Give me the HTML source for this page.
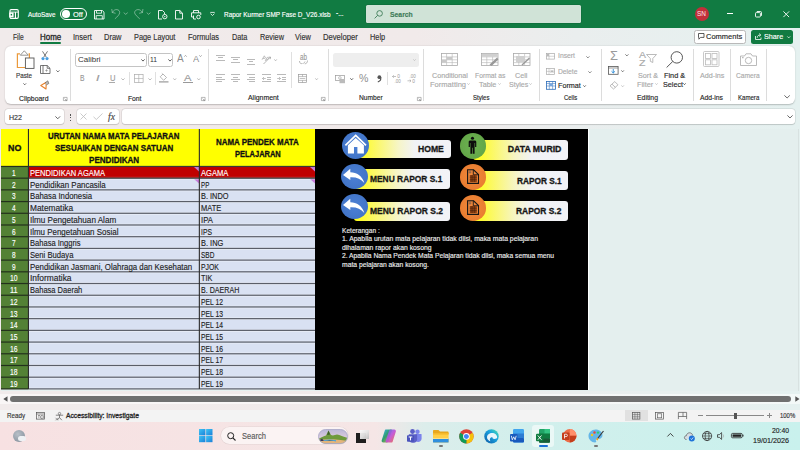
<!DOCTYPE html>
<html><head><meta charset="utf-8"><style>
*{margin:0;padding:0;box-sizing:border-box}
html,body{width:800px;height:450px;overflow:hidden;font-family:"Liberation Sans",sans-serif;}
body{position:relative;background:linear-gradient(90deg,#f1ebeb 0%,#f1eaea 52%,#eaeeee 72%,#e5f1f0 100%);}
.a{position:absolute}
.t{position:absolute;white-space:nowrap;line-height:1;-webkit-text-stroke:0.14px currentColor}
.b{-webkit-text-stroke:0.3px currentColor}
svg{position:absolute;overflow:visible}
</style></head><body>
<div class="a" style="left:0;top:0;width:800px;height:28px;background:#117b42"></div>
<svg style="left:9px;top:9px" width="10" height="10" viewBox="0 0 10 10"><rect x="0.9" y="0.6" width="8.4" height="8.8" rx="1.3" fill="none" stroke="#fff" stroke-width="1.1"/><path d="M0.9 3.1H9.3" stroke="#fff" stroke-width="0.9"/><rect x="0.2" y="3.4" width="4.4" height="4.8" rx=".5" fill="#fff"/><rect x="1.7" y="4.9" width="1.4" height="1.6" fill="#117b42"/><rect x="5.9" y="3.1" width="1.1" height="6.2" fill="#fff"/></svg>
<div class="t " style="left:28.10px;top:11.00px;font-size:7.27px;color:#ffffff;transform:scaleX(0.873);transform-origin:0 0;">AutoSave</div>
<div class="a" style="left:60px;top:7.8px;width:27px;height:12.4px;border:1px solid #fff;border-radius:7px"></div>
<div class="a" style="left:62.4px;top:10.2px;width:7.6px;height:7.6px;border-radius:50%;background:#fff"></div>
<div class="t " style="left:73.00px;top:11.00px;font-size:7.27px;color:#ffffff;transform:scaleX(1.022);transform-origin:0 0;">Off</div>
<svg style="left:94px;top:9.6px" width="10.5" height="9.5" viewBox="0 0 10.5 9.5"><path d="M0.5 0.5H8.3L10 2.2V9H0.5Z" fill="none" stroke="#fff" stroke-width="0.9"/><path d="M2.5 0.5V3.2H7.5V0.5M2.2 9V5.6H8.3V9" fill="none" stroke="#fff" stroke-width="0.8"/></svg>
<svg style="left:0;top:0" width="160" height="28" viewBox="0 0 160 28"><g fill="none" stroke="rgba(255,255,255,.42)" stroke-width="0.95" stroke-linecap="round"><path d="M112.4 12.3C113.6 10.3 115 9.5 116.9 9.6C118.7 9.8 119.8 11 119.7 12.75C119.6 14.5 117.2 16.8 115.2 18.6"/><path d="M111.8 9.4L112.3 12.5L115.2 13.2"/><path d="M142.3 12.3C141.1 10.3 139.7 9.5 137.8 9.6C136 9.8 134.6 11 134.6 12.75C134.7 14.5 137.5 16.8 139.5 18.6"/><path d="M142.9 9.4L142.4 12.5L139.5 13.2"/><path d="M124 12.9L125.7 14.3L127.4 12.9"/><path d="M147 12.9L148.6 14.3L150.2 12.9"/></g></svg>
<svg style="left:157.5px;top:9.6px" width="10" height="9.5" viewBox="0 0 10 9.5"><path d="M0.5 0.5H4.5L6.5 2.5V4M0.5 0.5V9H4" fill="none" stroke="#fff" stroke-width=".9"/><circle cx="6.8" cy="6.6" r="2.2" fill="none" stroke="#fff" stroke-width=".9"/><circle cx="6.8" cy="6.6" r=".7" fill="#fff"/></svg>
<svg style="left:175px;top:9.6px" width="8" height="9.5" viewBox="0 0 8 9.5"><path d="M0.5 0.5H4.8L7.5 3.2V9H0.5Z M4.8 0.5V3.2H7.5" fill="none" stroke="#fff" stroke-width=".9"/></svg>
<svg style="left:190.7px;top:9.6px" width="10.5" height="9.5" viewBox="0 0 10.5 9.5"><path d="M2.5 2.8V0.5H7.5V2.8M2.5 7H0.5V2.8H9.8V5M2.5 5.5V9H5" fill="none" stroke="#fff" stroke-width=".9"/><circle cx="7.5" cy="7" r="1.8" fill="none" stroke="#fff" stroke-width=".9"/></svg>
<svg style="left:210px;top:12.3px" width="5" height="4" viewBox="0 0 5 4"><path d="M0.3 0.4H4.7M0.6 1.7L2.5 3.5L4.4 1.7" fill="none" stroke="#fff" stroke-width=".8"/></svg>
<div class="t " style="left:224.40px;top:11.00px;font-size:7.27px;color:#ffffff;transform:scaleX(0.884);transform-origin:0 0;">Rapor Kurmer SMP Fase D_V26.xlsb</div>
<div class="t " style="left:336.00px;top:9.10px;font-size:9.33px;color:#ffffff;transform:scaleX(0.699);transform-origin:0 0;">-...</div>
<div class="a" style="left:365.5px;top:5px;width:215.3px;height:18px;background:#d0e3d7;border-radius:1.5px;box-shadow:0 0 0 0.5px rgba(0,0,0,.15)"></div>
<svg style="left:373.5px;top:9.5px" width="9" height="9" viewBox="0 0 9 9"><circle cx="5.6" cy="3.4" r="2.8" fill="none" stroke="#3f7d59" stroke-width=".9"/><path d="M3.6 5.4L0.6 8.4" stroke="#3f7d59" stroke-width=".9"/></svg>
<div class="t " style="left:390.00px;top:11.00px;font-size:7.99px;font-weight:bold;color:#3d7b57;transform:scaleX(0.855);transform-origin:0 0;">Search</div>
<div class="a" style="left:694.6px;top:6.8px;width:14.2px;height:14.2px;border-radius:50%;background:#c0303a"></div>
<div class="t " style="left:697.20px;top:11.00px;font-size:6.40px;color:#ffe5e5;transform:scaleX(1.012);transform-origin:0 0;-webkit-text-stroke:0;">SN</div>
<div class="a" style="left:726.5px;top:13.4px;width:6.3px;height:0.9px;background:#fff"></div>
<svg style="left:754.5px;top:11px" width="7" height="6.5" viewBox="0 0 7 6.5"><rect x="0.5" y="1.6" width="4.9" height="4.4" rx=".8" fill="none" stroke="#fff" stroke-width=".9"/><path d="M1.8 0.5H5.6A1 1 0 0 1 6.5 1.4V4.8" fill="none" stroke="#fff" stroke-width=".9"/></svg>
<svg style="left:783px;top:11px" width="6.5" height="6.5" viewBox="0 0 6.5 6.5"><path d="M0.4 0.4L6.1 6.1M6.1 0.4L0.4 6.1" stroke="#fff" stroke-width=".9"/></svg>
<div class="t " style="left:13.00px;top:33.00px;font-size:8.36px;color:#303030;transform:scaleX(0.799);transform-origin:0 0;">File</div>
<div class="t " style="left:72.50px;top:33.00px;font-size:8.36px;color:#303030;transform:scaleX(0.897);transform-origin:0 0;">Insert</div>
<div class="t " style="left:103.75px;top:33.00px;font-size:8.36px;color:#303030;transform:scaleX(0.897);transform-origin:0 0;">Draw</div>
<div class="t " style="left:134.25px;top:33.00px;font-size:8.36px;color:#303030;transform:scaleX(0.884);transform-origin:0 0;">Page Layout</div>
<div class="t " style="left:188.25px;top:33.00px;font-size:8.36px;color:#303030;transform:scaleX(0.891);transform-origin:0 0;">Formulas</div>
<div class="t " style="left:232.25px;top:33.00px;font-size:8.36px;color:#303030;transform:scaleX(0.874);transform-origin:0 0;">Data</div>
<div class="t " style="left:259.75px;top:33.00px;font-size:8.36px;color:#303030;transform:scaleX(0.874);transform-origin:0 0;">Review</div>
<div class="t " style="left:295.00px;top:33.00px;font-size:8.36px;color:#303030;transform:scaleX(0.885);transform-origin:0 0;">View</div>
<div class="t " style="left:322.50px;top:33.00px;font-size:8.36px;color:#303030;transform:scaleX(0.916);transform-origin:0 0;">Developer</div>
<div class="t " style="left:369.80px;top:33.00px;font-size:8.36px;color:#303030;transform:scaleX(0.879);transform-origin:0 0;">Help</div>
<div class="t b" style="left:39.50px;top:33.00px;font-size:8.36px;color:#262626;transform:scaleX(0.952);transform-origin:0 0;">Home</div>
<div class="a" style="left:39.5px;top:42.4px;width:21.3px;height:1.5px;border-radius:1px;background:#117b42"></div>
<div class="a" style="left:694.2px;top:30px;width:52px;height:13.8px;background:#fff;border:1px solid #b9b9b9;border-radius:2.5px"></div>
<svg style="left:697.5px;top:33.2px" width="6.5" height="7" viewBox="0 0 6.5 7"><path d="M0.5 0.5H6V4.4H2.6L0.9 6.2V4.4H0.5Z" fill="none" stroke="#333" stroke-width=".8"/></svg>
<div class="t " style="left:706.20px;top:33.00px;font-size:7.56px;color:#262626;transform:scaleX(0.993);transform-origin:0 0;">Comments</div>
<div class="a" style="left:751.2px;top:30px;width:41.8px;height:13.8px;background:#117b42;border-radius:2.5px"></div>
<svg style="left:754.5px;top:33px" width="7" height="7" viewBox="0 0 7 7"><path d="M0.5 3V6.5H6V4.5M2.2 4.8C2.2 3 3.5 2 5 2M4.2 0.6L5.9 2L4.2 3.4" fill="none" stroke="#fff" stroke-width=".8"/></svg>
<div class="t " style="left:763.80px;top:33.00px;font-size:7.56px;color:#fff;transform:scaleX(0.951);transform-origin:0 0;">Share</div>
<svg style="left:787.3px;top:35.6px" width="3.5" height="2.5" viewBox="0 0 3.5 2.5"><path d="M0.3 0.4L1.75 1.9L3.2 0.4" fill="none" stroke="#fff" stroke-width=".7"/></svg>
<div class="a" style="left:5px;top:46px;width:790px;height:58px;background:#fff;border-radius:6px;box-shadow:0 0.6px 1.5px rgba(0,0,0,.22)"></div>
<svg style="left:16px;top:50px" width="19" height="19" viewBox="0 0 19 19"><path d="M9 17.5H1.4V3.9H4M12.6 3.9H13.4V8" fill="none" stroke="#eb9a3b" stroke-width="1.2"/><path d="M4.3 5.2L8.3 0.8L12.3 5.2Z" fill="#fff" stroke="#7a7a7a" stroke-width=".8" stroke-linejoin="round"/><rect x="9.4" y="8" width="8.6" height="10.4" fill="#fff" stroke="#555" stroke-width=".9"/></svg>
<div class="t " style="left:15.90px;top:72.00px;font-size:7.85px;color:#333;transform:scaleX(0.803);transform-origin:0 0;">Paste</div>
<svg style="left:22.5px;top:83.2px" width="3.5" height="2.2" viewBox="0 0 3.5 2.2"><path d="M0.4 0.4L1.75 1.8000000000000003L3.1 0.4" fill="none" stroke="#444" stroke-width="0.8"/></svg>
<svg style="left:40.5px;top:51px" width="8" height="9.5" viewBox="0 0 8 9.5"><path d="M1.5 0.3L5.2 6M6.5 0.3L2.8 6" stroke="#555" stroke-width=".8"/><circle cx="2" cy="7.6" r="1.6" fill="#4a9ee0"/><circle cx="6" cy="7.6" r="1.6" fill="#4a9ee0"/></svg>
<svg style="left:39.5px;top:65.3px" width="10.5" height="9" viewBox="0 0 10.5 9"><path d="M3 8.5H0.5V0.5H3.5" fill="none" stroke="#555" stroke-width=".8"/><path d="M3 0.5H7.2L10 3.3V8.5H3Z M7.2 0.5V3.3H10" fill="none" stroke="#555" stroke-width=".8"/><path d="M5.2 5.5H7.8M6.5 4.2V6.8" stroke="#777" stroke-width=".5"/></svg>
<svg style="left:56.2px;top:69.5px" width="3.8" height="2.3" viewBox="0 0 3.8 2.3"><path d="M0.4 0.4L1.9 1.9L3.4 0.4" fill="none" stroke="#444" stroke-width="0.8"/></svg>
<svg style="left:40px;top:80.3px" width="10" height="9.5" viewBox="0 0 10 9.5"><path d="M0.8 5.5L6.2 2.3L6 9Z" fill="#fff" stroke="#e8812a" stroke-width="1.1" stroke-linejoin="round"/><path d="M5 3L7.8 0.8L8.8 3.5L6.3 5" fill="#bbb" stroke="#555" stroke-width=".6"/></svg>
<div class="t " style="left:18.75px;top:95.00px;font-size:6.98px;color:#262626;transform:scaleX(0.988);transform-origin:0 0;">Clipboard</div>
<svg style="left:63.2px;top:96.6px" width="4.5" height="4" viewBox="0 0 4.5 4"><path d="M0.4 3.6V0.4H4.1V3.6Z" fill="none" stroke="#8a8a8a" stroke-width=".6"/><path d="M1.6 1.6L3.6 3.6M3.6 2.4V3.6H2.4" fill="none" stroke="#8a8a8a" stroke-width=".6"/></svg>
<div class="a" style="left:69.5px;top:48.8px;width:1px;height:52.2px;background:#dcdcdc"></div>
<div class="a" style="left:75px;top:52.8px;width:71.8px;height:14px;border:1px solid #c4c4c4;border-radius:2.5px;background:#fff"></div>
<div class="t " style="left:77.80px;top:56.00px;font-size:6.98px;color:#333;transform:scaleX(1.143);transform-origin:0 0;-webkit-text-stroke:0;">Calibri</div>
<svg style="left:141.2px;top:59.2px" width="4" height="2.5" viewBox="0 0 4 2.5"><path d="M0.4 0.4L2.0 2.1L3.6 0.4" fill="none" stroke="#333" stroke-width="0.8"/></svg>
<div class="a" style="left:148.3px;top:52.8px;width:24.7px;height:14px;border:1px solid #c4c4c4;border-radius:2.5px;background:#fff"></div>
<div class="t " style="left:150.20px;top:56.00px;font-size:6.98px;color:#333;transform:scaleX(0.965);transform-origin:0 0;-webkit-text-stroke:0;">11</div>
<svg style="left:167.6px;top:59.2px" width="4" height="2.5" viewBox="0 0 4 2.5"><path d="M0.4 0.4L2.0 2.1L3.6 0.4" fill="none" stroke="#333" stroke-width="0.8"/></svg>
<div class="t " style="left:177.30px;top:54.00px;font-size:10.47px;color:#8c8c8c;transform:scaleX(0.956);transform-origin:0 0;-webkit-text-stroke:0;">A</div>
<svg style="left:183.8px;top:55px" width="3" height="2" viewBox="0 0 3 2"><path d="M0.3 1.7L1.5 0.4L2.7 1.7" fill="none" stroke="#777" stroke-width=".6"/></svg>
<div class="t " style="left:193.30px;top:56.00px;font-size:8.28px;color:#8c8c8c;transform:scaleX(1.117);transform-origin:0 0;-webkit-text-stroke:0;">A</div>
<svg style="left:199.2px;top:55px" width="3" height="2" viewBox="0 0 3 2"><path d="M0.3 0.3L1.5 1.6L2.7 0.3" fill="none" stroke="#777" stroke-width=".6"/></svg>
<div class="t " style="left:80.00px;top:74.00px;font-size:8.43px;color:#9a9a9a;transform:scaleX(0.803);transform-origin:0 0;">B</div>
<div class="t " style="left:95.50px;top:73.86px;font-size:8.43px;font-style:italic;color:#9a9a9a;transform:scaleX(1.483);transform-origin:0 0;">I</div>
<div class="t " style="left:109.50px;top:74.00px;font-size:8.43px;color:#9a9a9a;transform:scaleX(0.906);transform-origin:0 0;">U</div>
<div class="a" style="left:109px;top:82px;width:6px;height:.7px;background:#aaa"></div>
<svg style="left:121px;top:77.9px" width="4" height="2.4" viewBox="0 0 4 2.4"><path d="M0.4 0.4L2.0 2.0L3.6 0.4" fill="none" stroke="#aaa" stroke-width="0.8"/></svg>
<div class="a" style="left:129.0px;top:72px;width:1px;height:13.299999999999997px;background:#e0e0e0"></div>
<svg style="left:133.8px;top:74px" width="9.5" height="9" viewBox="0 0 9.5 9"><rect x="0.4" y="0.4" width="8.7" height="8.2" fill="none" stroke="#aaa" stroke-width=".7"/><path d="M4.75 0.4V8.6M0.4 4.5H9.1" stroke="#aaa" stroke-width=".6"/></svg>
<svg style="left:147.5px;top:77.9px" width="4" height="2.4" viewBox="0 0 4 2.4"><path d="M0.4 0.4L2.0 2.0L3.6 0.4" fill="none" stroke="#aaa" stroke-width="0.8"/></svg>
<div class="a" style="left:154.8px;top:72px;width:1px;height:13.299999999999997px;background:#e0e0e0"></div>
<svg style="left:159.3px;top:73.3px" width="9.5" height="9.5" viewBox="0 0 9.5 9.5"><path d="M4 1L7.5 4.5L4.6 7.3L1.2 3.8Z" fill="none" stroke="#999" stroke-width=".7"/><path d="M2.8 0.3L4 1.4" stroke="#999" stroke-width=".6"/><rect x="0" y="8.3" width="9.5" height="1.2" fill="#999"/></svg>
<svg style="left:173.3px;top:77.9px" width="3.5" height="2.4" viewBox="0 0 3.5 2.4"><path d="M0.4 0.4L1.75 2.0L3.1 0.4" fill="none" stroke="#aaa" stroke-width="0.8"/></svg>
<div class="t " style="left:184.30px;top:73.00px;font-size:9.88px;color:#999;transform:scaleX(1.133);transform-origin:0 0;">A</div>
<div class="a" style="left:183.3px;top:81.8px;width:9.5px;height:1.2px;background:#999"></div>
<svg style="left:197.2px;top:77.9px" width="3.5" height="2.4" viewBox="0 0 3.5 2.4"><path d="M0.4 0.4L1.75 2.0L3.1 0.4" fill="none" stroke="#aaa" stroke-width="0.8"/></svg>
<div class="t " style="left:128.30px;top:95.00px;font-size:6.98px;color:#262626;transform:scaleX(0.968);transform-origin:0 0;">Font</div>
<svg style="left:201.3px;top:96.6px" width="4.5" height="4" viewBox="0 0 4.5 4"><path d="M0.4 3.6V0.4H4.1V3.6Z" fill="none" stroke="#8a8a8a" stroke-width=".6"/><path d="M1.6 1.6L3.6 3.6M3.6 2.4V3.6H2.4" fill="none" stroke="#8a8a8a" stroke-width=".6"/></svg>
<div class="a" style="left:207.8px;top:48.7px;width:1px;height:52.0px;background:#dcdcdc"></div>
<div class="a" style="left:216.0px;top:54.9px;width:8.5px;height:.8px;background:#bababa"></div>
<div class="a" style="left:218.0px;top:57.2px;width:4.5px;height:.8px;background:#bababa"></div>
<div class="a" style="left:216.0px;top:59.8px;width:8.5px;height:.8px;background:#bababa"></div>
<div class="a" style="left:231.0px;top:56.8px;width:8.5px;height:.8px;background:#bababa"></div>
<div class="a" style="left:233.0px;top:59.1px;width:4.5px;height:.8px;background:#bababa"></div>
<div class="a" style="left:231.0px;top:61.7px;width:8.5px;height:.8px;background:#bababa"></div>
<div class="a" style="left:246.5px;top:58.9px;width:8.5px;height:.8px;background:#bababa"></div>
<div class="a" style="left:248.5px;top:61.2px;width:4.5px;height:.8px;background:#bababa"></div>
<div class="a" style="left:246.5px;top:63.8px;width:8.5px;height:.8px;background:#bababa"></div>
<svg style="left:261px;top:54.5px" width="10" height="10" viewBox="0 0 10 10"><path d="M2.5 9L9.5 2M9.5 2L7.3 2.3M9.5 2L9.2 4.2" fill="none" stroke="#999" stroke-width=".7"/><path d="M1 4.8L3.3 0.8L4.8 3.3M1.8 3.4H4M4.3 5.5L6 2.5A1 1 0 0 1 7.2 4Z" fill="none" stroke="#999" stroke-width=".6"/></svg>
<svg style="left:274.2px;top:59px" width="3.2" height="2.2" viewBox="0 0 3.2 2.2"><path d="M0.4 0.4L1.6 1.8000000000000003L2.8000000000000003 0.4" fill="none" stroke="#aaa" stroke-width="0.8"/></svg>
<div class="a" style="left:216.0px;top:74.1px;width:8.5px;height:.8px;background:#bababa"></div>
<div class="a" style="left:216.0px;top:76.8px;width:5.8px;height:.8px;background:#bababa"></div>
<div class="a" style="left:216.0px;top:79.1px;width:8.5px;height:.8px;background:#bababa"></div>
<div class="a" style="left:216.0px;top:81.4px;width:5.8px;height:.8px;background:#bababa"></div>
<div class="a" style="left:231.0px;top:74.1px;width:8.5px;height:.8px;background:#bababa"></div>
<div class="a" style="left:232.6px;top:76.8px;width:5.3px;height:.8px;background:#bababa"></div>
<div class="a" style="left:231.0px;top:79.1px;width:8.5px;height:.8px;background:#bababa"></div>
<div class="a" style="left:232.6px;top:81.4px;width:5.3px;height:.8px;background:#bababa"></div>
<div class="a" style="left:246.5px;top:74.1px;width:8.5px;height:.8px;background:#bababa"></div>
<div class="a" style="left:249.2px;top:76.8px;width:5.8px;height:.8px;background:#bababa"></div>
<div class="a" style="left:246.5px;top:79.1px;width:8.5px;height:.8px;background:#bababa"></div>
<div class="a" style="left:249.2px;top:81.4px;width:5.8px;height:.8px;background:#bababa"></div>
<div class="a" style="left:262.0px;top:74.1px;width:8.5px;height:.8px;background:#bababa"></div>
<div class="a" style="left:266.5px;top:76.8px;width:4.0px;height:.8px;background:#bababa"></div>
<div class="a" style="left:266.5px;top:79.1px;width:4.0px;height:.8px;background:#bababa"></div>
<div class="a" style="left:262.0px;top:81.4px;width:8.5px;height:.8px;background:#bababa"></div>
<svg style="left:262px;top:76px" width="4" height="5" viewBox="0 0 4 5"><path d="M3.8 2.5H0.5M2 1L0.5 2.5L2 4" fill="none" stroke="#999" stroke-width=".6"/></svg>
<div class="a" style="left:277.0px;top:74.1px;width:8.5px;height:.8px;background:#bababa"></div>
<div class="a" style="left:281.5px;top:76.8px;width:4.0px;height:.8px;background:#bababa"></div>
<div class="a" style="left:281.5px;top:79.1px;width:4.0px;height:.8px;background:#bababa"></div>
<div class="a" style="left:277.0px;top:81.4px;width:8.5px;height:.8px;background:#bababa"></div>
<svg style="left:277px;top:76px" width="4" height="5" viewBox="0 0 4 5"><path d="M0.2 2.5H3.5M2 1L3.5 2.5L2 4" fill="none" stroke="#999" stroke-width=".6"/></svg>
<div class="a" style="left:291.2px;top:52px;width:1px;height:36px;background:#e0e0e0"></div>
<div class="t " style="left:299.50px;top:52.67px;font-size:8.65px;color:#999;transform:scaleX(0.729);transform-origin:0 0;">ab</div>
<svg style="left:298.8px;top:60.3px" width="9.5" height="4.5" viewBox="0 0 9.5 4.5"><path d="M0.5 1C0.5 3 1.5 4 3.5 3.5M6 1.5L4.5 3.7M8.5 0.5C8.5 2.5 7.5 3.8 5.8 3.8" fill="none" stroke="#999" stroke-width=".7"/></svg>
<svg style="left:297.7px;top:73.7px" width="9" height="9" viewBox="0 0 9 9"><rect x="0.4" y="0.4" width="8.2" height="8.2" fill="none" stroke="#999" stroke-width=".7"/><path d="M0.4 2.6H8.6M0.4 6.4H8.6M4.5 6.4V8.6M4.5 0.4V2.6M1.7 4.5H7.3" stroke="#999" stroke-width=".6"/></svg>
<svg style="left:315px;top:77.7px" width="3.2" height="2.2" viewBox="0 0 3.2 2.2"><path d="M0.4 0.4L1.6 1.8000000000000003L2.8000000000000003 0.4" fill="none" stroke="#aaa" stroke-width="0.8"/></svg>
<div class="t " style="left:248.20px;top:94.00px;font-size:6.98px;color:#262626;transform:scaleX(0.993);transform-origin:0 0;">Alignment</div>
<svg style="left:321.4px;top:96.6px" width="4.5" height="4" viewBox="0 0 4.5 4"><path d="M0.4 3.6V0.4H4.1V3.6Z" fill="none" stroke="#8a8a8a" stroke-width=".6"/><path d="M1.6 1.6L3.6 3.6M3.6 2.4V3.6H2.4" fill="none" stroke="#8a8a8a" stroke-width=".6"/></svg>
<div class="a" style="left:327.8px;top:48.7px;width:1px;height:52.0px;background:#dcdcdc"></div>
<div class="a" style="left:333.2px;top:52.7px;width:85.8px;height:14px;border-radius:2.5px;background:#eeeeee"></div>
<svg style="left:413.3px;top:59.3px" width="3" height="2" viewBox="0 0 3 2"><path d="M0.4 0.4L1.5 1.6L2.6 0.4" fill="none" stroke="#bbb" stroke-width="0.8"/></svg>
<svg style="left:335px;top:75px" width="10.5" height="8.5" viewBox="0 0 10.5 8.5"><rect x="0.4" y="0.4" width="9" height="5" fill="none" stroke="#999" stroke-width=".7"/><circle cx="4.9" cy="2.9" r="1.3" fill="none" stroke="#999" stroke-width=".6"/><rect x="4.5" y="4" width="5.5" height="4.2" fill="#bbb"/></svg>
<svg style="left:349.7px;top:78.1px" width="3.4" height="2.2" viewBox="0 0 3.4 2.2"><path d="M0.4 0.4L1.7 1.8000000000000003L3.0 0.4" fill="none" stroke="#555" stroke-width="1"/></svg>
<div class="t " style="left:359.30px;top:72.98px;font-size:11.25px;color:#8f8f8f;transform:scaleX(0.939);transform-origin:0 0;-webkit-text-stroke:0;">%</div>
<svg style="left:377.3px;top:75px" width="4.6" height="7.2" viewBox="0 0 4.6 7.2"><circle cx="2.4" cy="2.2" r="1.9" fill="#555"/><path d="M3.6 2.5C4.2 4.5 3 6.2 0.8 7" fill="none" stroke="#555" stroke-width="1.2"/></svg>
<div class="a" style="left:387.3px;top:72.2px;width:1px;height:13.099999999999994px;background:#e0e0e0"></div>
<svg style="left:391.7px;top:73.7px" width="10" height="9" viewBox="0 0 10 9"><path d="M0.5 2.5H4M0.5 2.5L1.8 1.2M0.5 2.5L1.8 3.8" fill="none" stroke="#999" stroke-width=".6"/><text x="5.2" y="4.3" font-size="4.8" fill="#999" font-family="Liberation Sans">0</text><text x="2.5" y="8.8" font-size="4.5" fill="#999" font-family="Liberation Sans">.00</text></svg>
<svg style="left:407px;top:73.7px" width="10" height="9" viewBox="0 0 10 9"><text x="2.5" y="4.3" font-size="4.5" fill="#999" font-family="Liberation Sans">.00</text><path d="M0.5 6.8H4M4 6.8L2.7 5.5M4 6.8L2.7 8.1" fill="none" stroke="#999" stroke-width=".6"/><text x="5.2" y="8.8" font-size="4.8" fill="#999" font-family="Liberation Sans">0</text></svg>
<div class="t " style="left:359.30px;top:94.00px;font-size:6.98px;color:#262626;transform:scaleX(0.956);transform-origin:0 0;">Number</div>
<svg style="left:416.7px;top:96.6px" width="4.5" height="4" viewBox="0 0 4.5 4"><path d="M0.4 3.6V0.4H4.1V3.6Z" fill="none" stroke="#8a8a8a" stroke-width=".6"/><path d="M1.6 1.6L3.6 3.6M3.6 2.4V3.6H2.4" fill="none" stroke="#8a8a8a" stroke-width=".6"/></svg>
<div class="a" style="left:422.9px;top:48.7px;width:1px;height:52.0px;background:#dcdcdc"></div>
<svg style="left:441.3px;top:52.5px" width="17" height="13" viewBox="0 0 17 13"><rect x="0.5" y="0.5" width="16" height="12" fill="none" stroke="#aaa" stroke-width=".8"/><path d="M0.5 3.9H16.5 M0.5 6.8H16.5 M0.5 9.6H16.5 M5.6 0.5V12.5 M11.2 0.5V12.5" stroke="#b5b5b5" stroke-width=".6"/><rect x="5.6" y="4" width="5.6" height="2.8" fill="#c8c8c8"/><rect x="0.8" y="6.8" width="4.8" height="2.8" fill="#c8c8c8"/></svg>
<svg style="left:481.3px;top:52.5px" width="17.5" height="13" viewBox="0 0 17.5 13"><rect x="0.5" y="0.5" width="16.5" height="12" fill="none" stroke="#aaa" stroke-width=".8"/><path d="M0.5 3.9H17.0 M0.5 6.8H17.0 M0.5 9.6H17.0 M5.8 0.5V12.5 M11.6 0.5V12.5" stroke="#b5b5b5" stroke-width=".6"/><rect x="0.8" y="0.8" width="16" height="3" fill="#d0d0d0"/><path d="M9 12L16.5 5M10 12.5L17 6" stroke="#999" stroke-width="1.3"/></svg>
<svg style="left:513px;top:52.5px" width="17.5" height="13" viewBox="0 0 17.5 13"><rect x="0.5" y="0.5" width="16.5" height="12" fill="none" stroke="#aaa" stroke-width=".8"/><path d="M0.5 3.9H17.0 M0.5 6.8H17.0 M0.5 9.6H17.0 M5.8 0.5V12.5 M11.6 0.5V12.5" stroke="#b5b5b5" stroke-width=".6"/><rect x="3" y="3" width="9" height="6" fill="#d0d0d0"/><path d="M9 12L16.5 5" stroke="#999" stroke-width="1.4"/></svg>
<div class="t " style="left:432.00px;top:72.00px;font-size:7.99px;color:#a9a9a9;transform:scaleX(0.900);transform-origin:0 0;">Conditional</div>
<div class="t " style="left:429.50px;top:81.00px;font-size:7.99px;color:#a9a9a9;transform:scaleX(0.945);transform-origin:0 0;">Formatting</div>
<svg style="left:467px;top:83.3px" width="3" height="2" viewBox="0 0 3 2"><path d="M0.4 0.4L1.5 1.6L2.6 0.4" fill="none" stroke="#bbb" stroke-width="0.8"/></svg>
<div class="t " style="left:474.50px;top:72.00px;font-size:7.99px;color:#a9a9a9;transform:scaleX(0.848);transform-origin:0 0;">Format as</div>
<div class="t " style="left:478.80px;top:81.00px;font-size:7.99px;color:#a9a9a9;transform:scaleX(0.911);transform-origin:0 0;">Table</div>
<svg style="left:497.5px;top:83.3px" width="3" height="2" viewBox="0 0 3 2"><path d="M0.4 0.4L1.5 1.6L2.6 0.4" fill="none" stroke="#bbb" stroke-width="0.8"/></svg>
<div class="t " style="left:515.00px;top:72.00px;font-size:7.99px;color:#a9a9a9;transform:scaleX(0.906);transform-origin:0 0;">Cell</div>
<div class="t " style="left:508.80px;top:81.00px;font-size:7.99px;color:#a9a9a9;transform:scaleX(0.891);transform-origin:0 0;">Styles</div>
<svg style="left:529px;top:83.3px" width="3" height="2" viewBox="0 0 3 2"><path d="M0.4 0.4L1.5 1.6L2.6 0.4" fill="none" stroke="#bbb" stroke-width="0.8"/></svg>
<div class="t " style="left:473.00px;top:94.00px;font-size:6.98px;color:#262626;transform:scaleX(0.868);transform-origin:0 0;">Styles</div>
<div class="a" style="left:539.0px;top:48.7px;width:1px;height:52.0px;background:#dcdcdc"></div>
<svg style="left:546.3px;top:52.5px" width="9" height="6.5" viewBox="0 0 9 6.5"><rect x="0.4" y="0.4" width="8.2" height="5.7" fill="none" stroke="#aaa" stroke-width=".7"/><path d="M0.4 3.25H8.6M3 0.4V6.1" stroke="#aaa" stroke-width=".5"/><rect x="1" y="1" width="2" height="2" fill="#bbb"/></svg>
<div class="t " style="left:558.00px;top:52.00px;font-size:7.56px;color:#a9a9a9;transform:scaleX(0.900);transform-origin:0 0;">Insert</div>
<svg style="left:585.5px;top:55.5px" width="3.8" height="2.3" viewBox="0 0 3.8 2.3"><path d="M0.4 0.4L1.9 1.9L3.4 0.4" fill="none" stroke="#666" stroke-width="0.8"/></svg>
<svg style="left:546.3px;top:67.5px" width="9" height="6.8" viewBox="0 0 9 6.8"><rect x="0.4" y="0.4" width="8.2" height="6" fill="none" stroke="#aaa" stroke-width=".7"/><path d="M0.4 3.4H8.6M3 0.4V6.4" stroke="#aaa" stroke-width=".5"/><path d="M4.5 1.8L7.5 5M7.5 1.8L4.5 5" stroke="#999" stroke-width=".6"/></svg>
<div class="t " style="left:558.00px;top:68.00px;font-size:7.56px;color:#a9a9a9;transform:scaleX(0.893);transform-origin:0 0;">Delete</div>
<svg style="left:587.6px;top:70.5px" width="3.8" height="2.3" viewBox="0 0 3.8 2.3"><path d="M0.4 0.4L1.9 1.9L3.4 0.4" fill="none" stroke="#666" stroke-width="0.8"/></svg>
<svg style="left:546.3px;top:81.3px" width="10" height="8.7" viewBox="0 0 10 8.7"><rect x="0.4" y="0.4" width="9.2" height="7.9" fill="#fff" stroke="#2b6cb8" stroke-width=".8"/><path d="M0.4 2.5H9.6M0.4 5H9.6M3.3 0.4V8.3M6.6 0.4V8.3" stroke="#2b6cb8" stroke-width=".5"/><rect x="3.3" y="2.5" width="3.3" height="2.5" fill="#77a7e0"/></svg>
<div class="t " style="left:558.00px;top:82.00px;font-size:7.56px;color:#262626;transform:scaleX(0.953);transform-origin:0 0;">Format</div>
<svg style="left:582.8px;top:84.9px" width="3.2" height="2.1" viewBox="0 0 3.2 2.1"><path d="M0.4 0.4L1.6 1.7000000000000002L2.8000000000000003 0.4" fill="none" stroke="#444" stroke-width="0.8"/></svg>
<div class="t " style="left:563.80px;top:94.00px;font-size:6.98px;color:#262626;transform:scaleX(0.850);transform-origin:0 0;">Cells</div>
<div class="a" style="left:600.8px;top:48.7px;width:1px;height:52.0px;background:#dcdcdc"></div>
<div class="t " style="left:609.50px;top:49.57px;font-size:12.32px;color:#9a9a9a;transform:scaleX(1.047);transform-origin:0 0;-webkit-text-stroke:0;">Σ</div>
<svg style="left:625px;top:54.3px" width="3.8" height="2.3" viewBox="0 0 3.8 2.3"><path d="M0.4 0.4L1.9 1.9L3.4 0.4" fill="none" stroke="#555" stroke-width="0.8"/></svg>
<svg style="left:608.3px;top:66.3px" width="10.5" height="8.7" viewBox="0 0 10.5 8.7"><rect x="0.4" y="0.4" width="9.7" height="7.9" fill="#fff" stroke="#555" stroke-width=".8"/><path d="M0.4 2H10.1" stroke="#555" stroke-width=".6"/><path d="M5.25 3V7M3.5 5.3L5.25 7L7 5.3" fill="none" stroke="#2a8ad6" stroke-width=".9"/></svg>
<svg style="left:621.3px;top:69.5px" width="3.3" height="2.2" viewBox="0 0 3.3 2.2"><path d="M0.4 0.4L1.65 1.8000000000000003L2.9 0.4" fill="none" stroke="#555" stroke-width="0.8"/></svg>
<svg style="left:608.8px;top:81.3px" width="9.5" height="8.3" viewBox="0 0 9.5 8.3"><path d="M5.8 0.6L9 3.8L4.5 8L1 4.8Z" fill="none" stroke="#aaa" stroke-width=".8"/><path d="M3 3.2L6.4 6.4" stroke="#aaa" stroke-width=".8"/></svg>
<svg style="left:621.3px;top:85px" width="3.3" height="2.2" viewBox="0 0 3.3 2.2"><path d="M0.4 0.4L1.65 1.8000000000000003L2.9 0.4" fill="none" stroke="#bbb" stroke-width="0.8"/></svg>
<div class="t " style="left:638.50px;top:51.00px;font-size:8.72px;color:#aaa;transform:scaleX(1.198);transform-origin:0 0;">A</div>
<div class="t " style="left:638.50px;top:58.00px;font-size:9.74px;color:#aaa;transform:scaleX(1.094);transform-origin:0 0;">Z</div>
<svg style="left:645.5px;top:53.5px" width="11" height="9" viewBox="0 0 11 9"><path d="M0.5 0.5H10.5L6.8 4.5V8.5L4.3 7.3V4.5Z" fill="none" stroke="#aaa" stroke-width=".8"/></svg>
<div class="t " style="left:637.50px;top:72.00px;font-size:7.99px;color:#a9a9a9;transform:scaleX(0.900);transform-origin:0 0;">Sort &</div>
<div class="t " style="left:637.00px;top:81.00px;font-size:7.99px;color:#a9a9a9;transform:scaleX(0.918);transform-origin:0 0;">Filter</div>
<svg style="left:654.5px;top:83.3px" width="3" height="2" viewBox="0 0 3 2"><path d="M0.4 0.4L1.5 1.6L2.6 0.4" fill="none" stroke="#bbb" stroke-width="0.8"/></svg>
<svg style="left:666px;top:51px" width="17.5" height="17" viewBox="0 0 17.5 17"><circle cx="10.8" cy="6.4" r="5.7" fill="none" stroke="#444" stroke-width=".9"/><path d="M6.7 10.5L0.6 16.5" stroke="#444" stroke-width=".9"/></svg>
<div class="t " style="left:663.80px;top:72.00px;font-size:7.99px;color:#262626;transform:scaleX(0.918);transform-origin:0 0;">Find &</div>
<div class="t " style="left:662.50px;top:81.00px;font-size:7.99px;color:#262626;transform:scaleX(0.900);transform-origin:0 0;">Select</div>
<svg style="left:683.3px;top:83.3px" width="3" height="2" viewBox="0 0 3 2"><path d="M0.4 0.4L1.5 1.6L2.6 0.4" fill="none" stroke="#333" stroke-width="0.8"/></svg>
<div class="t " style="left:637.00px;top:94.00px;font-size:6.98px;color:#262626;transform:scaleX(0.984);transform-origin:0 0;">Editing</div>
<div class="a" style="left:692.5px;top:48.7px;width:1px;height:52.0px;background:#dcdcdc"></div>
<svg style="left:703px;top:51.3px" width="16.5" height="16" viewBox="0 0 16.5 16"><rect x="0.5" y="0.5" width="15.5" height="15" rx="1" fill="none" stroke="#bbb" stroke-width=".8"/><rect x="2.5" y="2.5" width="5" height="5" fill="none" stroke="#bbb" stroke-width=".8"/><rect x="9" y="2.5" width="5" height="5" fill="none" stroke="#bbb" stroke-width=".8"/><rect x="2.5" y="8.8" width="5" height="5" fill="none" stroke="#bbb" stroke-width=".8"/><rect x="9" y="8.8" width="5" height="5" fill="none" stroke="#bbb" stroke-width=".8"/></svg>
<div class="t " style="left:699.50px;top:72.00px;font-size:7.99px;color:#a9a9a9;transform:scaleX(0.897);transform-origin:0 0;">Add-ins</div>
<div class="t " style="left:700.00px;top:94.00px;font-size:6.98px;color:#262626;transform:scaleX(0.972);transform-origin:0 0;">Add-ins</div>
<div class="a" style="left:729.5px;top:48.7px;width:1px;height:52.0px;background:#dcdcdc"></div>
<svg style="left:740px;top:52.5px" width="17" height="13" viewBox="0 0 17 13"><path d="M0.5 3H4.5L6 0.8H11L12.5 3H16.5V12.5H0.5Z" fill="none" stroke="#aaa" stroke-width=".8"/><circle cx="8.5" cy="7.5" r="3.2" fill="none" stroke="#aaa" stroke-width=".8"/><rect x="2" y="4.2" width="1.6" height="1" fill="#aaa"/></svg>
<div class="t " style="left:736.30px;top:72.00px;font-size:7.99px;color:#a9a9a9;transform:scaleX(0.833);transform-origin:0 0;">Camera</div>
<div class="t " style="left:737.50px;top:94.00px;font-size:6.98px;color:#262626;transform:scaleX(0.871);transform-origin:0 0;">Kamera</div>
<div class="a" style="left:765.8px;top:48.7px;width:1px;height:52.0px;background:#dcdcdc"></div>
<svg style="left:783.8px;top:94.6px" width="6.2" height="3.4" viewBox="0 0 6.2 3.4"><path d="M0.4 0.4L3.1 3.0L5.8 0.4" fill="none" stroke="#444" stroke-width="0.8"/></svg>
<div class="a" style="left:5px;top:109.4px;width:59px;height:14.6px;background:#fff;border-radius:3px;box-shadow:0 0 0 .5px rgba(0,0,0,.12),0 .6px 1px rgba(0,0,0,.12)"></div>
<div class="t " style="left:9.00px;top:114.00px;font-size:7.70px;color:#333;transform:scaleX(0.920);transform-origin:0 0;">H22</div>
<svg style="left:55px;top:116.2px" width="5.5" height="3.2" viewBox="0 0 5.5 3.2"><path d="M0.4 0.4L2.75 2.8000000000000003L5.1 0.4" fill="none" stroke="#555" stroke-width="0.9"/></svg>
<div class="a" style="left:69.6px;top:114.4px;width:1px;height:1.3px;background:#555"></div>
<div class="a" style="left:69.6px;top:117.2px;width:1px;height:1.3px;background:#555"></div>
<div class="a" style="left:69.6px;top:120px;width:1px;height:1.3px;background:#555"></div>
<div class="a" style="left:77px;top:109.4px;width:42px;height:14.6px;background:#fff;border-radius:3px;box-shadow:0 0 0 .5px rgba(0,0,0,.12),0 .6px 1px rgba(0,0,0,.12)"></div>
<svg style="left:80px;top:113.4px" width="7" height="7" viewBox="0 0 7 7"><path d="M0.5 0.5L6.5 6.5M6.5 0.5L0.5 6.5" stroke="#bdbdbd" stroke-width=".8"/></svg>
<svg style="left:93px;top:113.4px" width="10" height="7" viewBox="0 0 10 7"><path d="M0.5 3.8L3.3 6.5L9.5 0.5" fill="none" stroke="#bdbdbd" stroke-width=".8"/></svg>
<div class="t " style="left:108.20px;top:111.90px;font-size:10.28px;font-style:italic;color:#444;transform:scaleX(0.937);transform-origin:0 0;font-family:'Liberation Serif',serif;">fx</div>
<div class="a" style="left:122px;top:109.4px;width:672.7px;height:14.6px;background:#fff;border-radius:3px;box-shadow:0 0 0 .5px rgba(0,0,0,.12),0 .6px 1px rgba(0,0,0,.12)"></div>
<svg style="left:786.6px;top:114.6px" width="6" height="3.4" viewBox="0 0 6 3.4"><path d="M0.4 0.4L3.0 3.0L5.6 0.4" fill="none" stroke="#555" stroke-width="0.9"/></svg>
<div class="a" style="left:1px;top:128.5px;width:798px;height:262px;background:#e4efee;border-right:1px solid #d8e2e1"></div>
<div class="a" style="left:1px;top:129px;width:314px;height:37.6px;background:#ffff00"></div>
<div class="a" style="left:315px;top:129px;width:273px;height:260.5px;background:#000"></div>
<div class="a" style="left:588px;top:129px;width:1.3px;height:260.5px;background:rgba(255,255,255,.95)"></div>
<div class="a" style="left:28.6px;top:166.45px;width:286.4px;height:222.452px;background:#d9e1f2"></div>
<div class="a" style="left:1px;top:166.45px;width:27.6px;height:222.452px;background:#538135"></div>
<div class="a" style="left:28.6px;top:166.45px;width:286.4px;height:11.708px;background:#c00000"></div>
<svg style="left:193.6px;top:167px" width="5" height="4.4" viewBox="0 0 5 4.4"><path d="M0 0H5V4.4Z" fill="#c77ddb"/></svg>
<svg style="left:193.6px;top:178.8px" width="5" height="4.4" viewBox="0 0 5 4.4"><path d="M0 0H5V4.4Z" fill="#c77ddb"/></svg>
<svg style="left:310px;top:167px" width="5" height="4.4" viewBox="0 0 5 4.4"><path d="M0 0H5V4.4Z" fill="#c77ddb"/></svg>
<svg style="left:310px;top:178.8px" width="5" height="4.4" viewBox="0 0 5 4.4"><path d="M0 0H5V4.4Z" fill="#c77ddb"/></svg>
<svg style="left:0;top:120px" width="320" height="280" viewBox="0 120 320 280"><rect x="28.6" y="165.85" width="286.4" height="1.2" fill="#383838"/><rect x="1" y="165.85" width="27.6" height="1.2" fill="#22301c"/><rect x="28.6" y="176.86" width="286.4" height="0.7" fill="#fff" opacity=".35"/><rect x="28.6" y="178.76" width="286.4" height="0.8" fill="#fff" opacity=".45"/><rect x="28.6" y="177.56" width="286.4" height="1.2" fill="#383838"/><rect x="1" y="177.56" width="27.6" height="1.2" fill="#22301c"/><rect x="28.6" y="188.57" width="286.4" height="0.7" fill="#fff" opacity=".35"/><rect x="28.6" y="190.47" width="286.4" height="0.8" fill="#fff" opacity=".45"/><rect x="28.6" y="189.27" width="286.4" height="1.2" fill="#5a5e68"/><rect x="1" y="189.27" width="27.6" height="1.2" fill="#22301c"/><rect x="28.6" y="200.27" width="286.4" height="0.7" fill="#fff" opacity=".35"/><rect x="28.6" y="202.17" width="286.4" height="0.8" fill="#fff" opacity=".45"/><rect x="28.6" y="200.97" width="286.4" height="1.2" fill="#5a5e68"/><rect x="1" y="200.97" width="27.6" height="1.2" fill="#22301c"/><rect x="28.6" y="211.98" width="286.4" height="0.7" fill="#fff" opacity=".35"/><rect x="28.6" y="213.88" width="286.4" height="0.8" fill="#fff" opacity=".45"/><rect x="28.6" y="212.68" width="286.4" height="1.2" fill="#5a5e68"/><rect x="1" y="212.68" width="27.6" height="1.2" fill="#22301c"/><rect x="28.6" y="223.69" width="286.4" height="0.7" fill="#fff" opacity=".35"/><rect x="28.6" y="225.59" width="286.4" height="0.8" fill="#fff" opacity=".45"/><rect x="28.6" y="224.39" width="286.4" height="1.2" fill="#5a5e68"/><rect x="1" y="224.39" width="27.6" height="1.2" fill="#22301c"/><rect x="28.6" y="235.40" width="286.4" height="0.7" fill="#fff" opacity=".35"/><rect x="28.6" y="237.30" width="286.4" height="0.8" fill="#fff" opacity=".45"/><rect x="28.6" y="236.10" width="286.4" height="1.2" fill="#5a5e68"/><rect x="1" y="236.10" width="27.6" height="1.2" fill="#22301c"/><rect x="28.6" y="247.11" width="286.4" height="0.7" fill="#fff" opacity=".35"/><rect x="28.6" y="249.01" width="286.4" height="0.8" fill="#fff" opacity=".45"/><rect x="28.6" y="247.81" width="286.4" height="1.2" fill="#5a5e68"/><rect x="1" y="247.81" width="27.6" height="1.2" fill="#22301c"/><rect x="28.6" y="258.81" width="286.4" height="0.7" fill="#fff" opacity=".35"/><rect x="28.6" y="260.71" width="286.4" height="0.8" fill="#fff" opacity=".45"/><rect x="28.6" y="259.51" width="286.4" height="1.2" fill="#5a5e68"/><rect x="1" y="259.51" width="27.6" height="1.2" fill="#22301c"/><rect x="28.6" y="270.52" width="286.4" height="0.7" fill="#fff" opacity=".35"/><rect x="28.6" y="272.42" width="286.4" height="0.8" fill="#fff" opacity=".45"/><rect x="28.6" y="271.22" width="286.4" height="1.2" fill="#5a5e68"/><rect x="1" y="271.22" width="27.6" height="1.2" fill="#22301c"/><rect x="28.6" y="282.23" width="286.4" height="0.7" fill="#fff" opacity=".35"/><rect x="28.6" y="284.13" width="286.4" height="0.8" fill="#fff" opacity=".45"/><rect x="28.6" y="282.93" width="286.4" height="1.2" fill="#5a5e68"/><rect x="1" y="282.93" width="27.6" height="1.2" fill="#22301c"/><rect x="28.6" y="293.94" width="286.4" height="0.7" fill="#fff" opacity=".35"/><rect x="28.6" y="295.84" width="286.4" height="0.8" fill="#fff" opacity=".45"/><rect x="28.6" y="294.64" width="286.4" height="1.2" fill="#5a5e68"/><rect x="1" y="294.64" width="27.6" height="1.2" fill="#22301c"/><rect x="28.6" y="305.65" width="286.4" height="0.7" fill="#fff" opacity=".35"/><rect x="28.6" y="307.55" width="286.4" height="0.8" fill="#fff" opacity=".45"/><rect x="28.6" y="306.35" width="286.4" height="1.2" fill="#5a5e68"/><rect x="1" y="306.35" width="27.6" height="1.2" fill="#22301c"/><rect x="28.6" y="317.35" width="286.4" height="0.7" fill="#fff" opacity=".35"/><rect x="28.6" y="319.25" width="286.4" height="0.8" fill="#fff" opacity=".45"/><rect x="28.6" y="318.05" width="286.4" height="1.2" fill="#5a5e68"/><rect x="1" y="318.05" width="27.6" height="1.2" fill="#22301c"/><rect x="28.6" y="329.06" width="286.4" height="0.7" fill="#fff" opacity=".35"/><rect x="28.6" y="330.96" width="286.4" height="0.8" fill="#fff" opacity=".45"/><rect x="28.6" y="329.76" width="286.4" height="1.2" fill="#5a5e68"/><rect x="1" y="329.76" width="27.6" height="1.2" fill="#22301c"/><rect x="28.6" y="340.77" width="286.4" height="0.7" fill="#fff" opacity=".35"/><rect x="28.6" y="342.67" width="286.4" height="0.8" fill="#fff" opacity=".45"/><rect x="28.6" y="341.47" width="286.4" height="1.2" fill="#5a5e68"/><rect x="1" y="341.47" width="27.6" height="1.2" fill="#22301c"/><rect x="28.6" y="352.48" width="286.4" height="0.7" fill="#fff" opacity=".35"/><rect x="28.6" y="354.38" width="286.4" height="0.8" fill="#fff" opacity=".45"/><rect x="28.6" y="353.18" width="286.4" height="1.2" fill="#5a5e68"/><rect x="1" y="353.18" width="27.6" height="1.2" fill="#22301c"/><rect x="28.6" y="364.19" width="286.4" height="0.7" fill="#fff" opacity=".35"/><rect x="28.6" y="366.09" width="286.4" height="0.8" fill="#fff" opacity=".45"/><rect x="28.6" y="364.89" width="286.4" height="1.2" fill="#5a5e68"/><rect x="1" y="364.89" width="27.6" height="1.2" fill="#22301c"/><rect x="28.6" y="375.89" width="286.4" height="0.7" fill="#fff" opacity=".35"/><rect x="28.6" y="377.79" width="286.4" height="0.8" fill="#fff" opacity=".45"/><rect x="28.6" y="376.59" width="286.4" height="1.2" fill="#5a5e68"/><rect x="1" y="376.59" width="27.6" height="1.2" fill="#22301c"/><rect x="28.6" y="387.60" width="286.4" height="0.7" fill="#fff" opacity=".35"/><rect x="28.6" y="389.50" width="286.4" height="0.8" fill="#fff" opacity=".45"/><rect x="28.6" y="388.30" width="286.4" height="1.2" fill="#5a5e68"/><rect x="1" y="388.30" width="27.6" height="1.2" fill="#22301c"/><rect x="27.9" y="129" width="1.1" height="259.90" fill="#2b2b2b"/><rect x="198.8" y="129" width="1.1" height="259.90" fill="#2b2b2b"/></svg>
<div class="t " style="left:12.20px;top:169.00px;font-size:8.87px;color:#ffffff;transform:scaleX(0.732);transform-origin:0 0;">1</div>
<div class="t " style="left:30.00px;top:169.00px;font-size:8.43px;color:#ffffff;transform:scaleX(0.897);transform-origin:0 0;">PENDIDIKAN AGAMA</div>
<div class="t " style="left:201.10px;top:169.00px;font-size:8.43px;color:#ffffff;transform:scaleX(0.902);transform-origin:0 0;">AGAMA</div>
<div class="t " style="left:12.20px;top:181.00px;font-size:8.87px;color:#ffffff;transform:scaleX(0.732);transform-origin:0 0;">2</div>
<div class="t " style="left:30.00px;top:181.00px;font-size:8.43px;color:#1e1e1e;transform:scaleX(0.940);transform-origin:0 0;">Pendidikan Pancasila</div>
<div class="t " style="left:201.10px;top:181.00px;font-size:8.43px;color:#1e1e1e;transform:scaleX(0.737);transform-origin:0 0;">PP</div>
<div class="t " style="left:12.20px;top:192.00px;font-size:8.87px;color:#ffffff;transform:scaleX(0.732);transform-origin:0 0;">3</div>
<div class="t " style="left:30.00px;top:192.00px;font-size:8.43px;color:#1e1e1e;transform:scaleX(0.920);transform-origin:0 0;">Bahasa Indonesia</div>
<div class="t " style="left:201.10px;top:192.00px;font-size:8.43px;color:#1e1e1e;transform:scaleX(0.876);transform-origin:0 0;">B. INDO</div>
<div class="t " style="left:12.20px;top:204.00px;font-size:8.87px;color:#ffffff;transform:scaleX(0.732);transform-origin:0 0;">4</div>
<div class="t " style="left:30.00px;top:204.00px;font-size:8.43px;color:#1e1e1e;transform:scaleX(0.989);transform-origin:0 0;">Matematika</div>
<div class="t " style="left:201.10px;top:204.00px;font-size:8.43px;color:#1e1e1e;transform:scaleX(0.890);transform-origin:0 0;">MATE</div>
<div class="t " style="left:12.20px;top:216.00px;font-size:8.87px;color:#ffffff;transform:scaleX(0.732);transform-origin:0 0;">5</div>
<div class="t " style="left:30.00px;top:216.00px;font-size:8.43px;color:#1e1e1e;transform:scaleX(0.964);transform-origin:0 0;">Ilmu Pengetahuan Alam</div>
<div class="t " style="left:201.10px;top:216.00px;font-size:8.43px;color:#1e1e1e;transform:scaleX(0.917);transform-origin:0 0;">IPA</div>
<div class="t " style="left:12.20px;top:228.00px;font-size:8.87px;color:#ffffff;transform:scaleX(0.732);transform-origin:0 0;">6</div>
<div class="t " style="left:30.00px;top:228.00px;font-size:8.43px;color:#1e1e1e;transform:scaleX(0.944);transform-origin:0 0;">Ilmu Pengetahuan Sosial</div>
<div class="t " style="left:201.10px;top:228.00px;font-size:8.43px;color:#1e1e1e;transform:scaleX(0.810);transform-origin:0 0;">IPS</div>
<div class="t " style="left:12.20px;top:239.00px;font-size:8.87px;color:#ffffff;transform:scaleX(0.732);transform-origin:0 0;">7</div>
<div class="t " style="left:30.00px;top:239.00px;font-size:8.43px;color:#1e1e1e;transform:scaleX(0.898);transform-origin:0 0;">Bahasa Inggris</div>
<div class="t " style="left:201.10px;top:239.00px;font-size:8.43px;color:#1e1e1e;transform:scaleX(0.886);transform-origin:0 0;">B. ING</div>
<div class="t " style="left:12.20px;top:251.00px;font-size:8.87px;color:#ffffff;transform:scaleX(0.732);transform-origin:0 0;">8</div>
<div class="t " style="left:30.00px;top:251.00px;font-size:8.43px;color:#1e1e1e;transform:scaleX(0.909);transform-origin:0 0;">Seni Budaya</div>
<div class="t " style="left:201.10px;top:251.00px;font-size:8.43px;color:#1e1e1e;transform:scaleX(0.773);transform-origin:0 0;">SBD</div>
<div class="t " style="left:12.20px;top:263.00px;font-size:8.87px;color:#ffffff;transform:scaleX(0.732);transform-origin:0 0;">9</div>
<div class="t " style="left:30.00px;top:263.00px;font-size:8.43px;color:#1e1e1e;transform:scaleX(0.934);transform-origin:0 0;">Pendidikan Jasmani, Olahraga dan Kesehatan</div>
<div class="t " style="left:201.10px;top:263.00px;font-size:8.43px;color:#1e1e1e;transform:scaleX(0.814);transform-origin:0 0;">PJOK</div>
<div class="t " style="left:10.20px;top:274.00px;font-size:8.87px;color:#ffffff;transform:scaleX(0.772);transform-origin:0 0;">10</div>
<div class="t " style="left:30.00px;top:274.00px;font-size:8.43px;color:#1e1e1e;transform:scaleX(0.997);transform-origin:0 0;">Informatika</div>
<div class="t " style="left:201.10px;top:274.00px;font-size:8.43px;color:#1e1e1e;transform:scaleX(0.862);transform-origin:0 0;">TIK</div>
<div class="t " style="left:10.20px;top:286.00px;font-size:8.87px;color:#ffffff;transform:scaleX(0.824);transform-origin:0 0;">11</div>
<div class="t " style="left:30.00px;top:286.00px;font-size:8.43px;color:#1e1e1e;transform:scaleX(0.893);transform-origin:0 0;">Bahasa Daerah</div>
<div class="t " style="left:201.10px;top:286.00px;font-size:8.43px;color:#1e1e1e;transform:scaleX(0.843);transform-origin:0 0;">B. DAERAH</div>
<div class="t " style="left:10.20px;top:298.00px;font-size:8.87px;color:#ffffff;transform:scaleX(0.772);transform-origin:0 0;">12</div>
<div class="t " style="left:201.30px;top:298.00px;font-size:8.43px;color:#1e1e1e;transform:scaleX(0.804);transform-origin:0 0;">PEL 12</div>
<div class="t " style="left:10.20px;top:310.00px;font-size:8.87px;color:#ffffff;transform:scaleX(0.772);transform-origin:0 0;">13</div>
<div class="t " style="left:201.30px;top:310.00px;font-size:8.43px;color:#1e1e1e;transform:scaleX(0.804);transform-origin:0 0;">PEL 13</div>
<div class="t " style="left:10.20px;top:321.00px;font-size:8.87px;color:#ffffff;transform:scaleX(0.772);transform-origin:0 0;">14</div>
<div class="t " style="left:201.30px;top:321.00px;font-size:8.43px;color:#1e1e1e;transform:scaleX(0.804);transform-origin:0 0;">PEL 14</div>
<div class="t " style="left:10.20px;top:333.00px;font-size:8.87px;color:#ffffff;transform:scaleX(0.772);transform-origin:0 0;">15</div>
<div class="t " style="left:201.30px;top:333.00px;font-size:8.43px;color:#1e1e1e;transform:scaleX(0.804);transform-origin:0 0;">PEL 15</div>
<div class="t " style="left:10.20px;top:345.00px;font-size:8.87px;color:#ffffff;transform:scaleX(0.772);transform-origin:0 0;">16</div>
<div class="t " style="left:201.30px;top:345.00px;font-size:8.43px;color:#1e1e1e;transform:scaleX(0.804);transform-origin:0 0;">PEL 16</div>
<div class="t " style="left:10.20px;top:356.00px;font-size:8.87px;color:#ffffff;transform:scaleX(0.772);transform-origin:0 0;">17</div>
<div class="t " style="left:201.30px;top:356.00px;font-size:8.43px;color:#1e1e1e;transform:scaleX(0.804);transform-origin:0 0;">PEL 17</div>
<div class="t " style="left:10.20px;top:368.00px;font-size:8.87px;color:#ffffff;transform:scaleX(0.772);transform-origin:0 0;">18</div>
<div class="t " style="left:201.30px;top:368.00px;font-size:8.43px;color:#1e1e1e;transform:scaleX(0.804);transform-origin:0 0;">PEL 18</div>
<div class="t " style="left:10.20px;top:380.00px;font-size:8.87px;color:#ffffff;transform:scaleX(0.772);transform-origin:0 0;">19</div>
<div class="t " style="left:201.30px;top:380.00px;font-size:8.43px;color:#1e1e1e;transform:scaleX(0.804);transform-origin:0 0;">PEL 19</div>
<div class="t b" style="left:8.20px;top:144.00px;font-size:8.72px;font-weight:bold;color:#111111;transform:scaleX(1.017);transform-origin:0 0;">NO</div>
<div class="t b" style="left:48.10px;top:132.00px;font-size:8.72px;font-weight:bold;color:#111111;transform:scaleX(0.899);transform-origin:0 0;">URUTAN NAMA MATA PELAJARAN</div>
<div class="t b" style="left:54.90px;top:144.00px;font-size:8.87px;font-weight:bold;color:#111111;transform:scaleX(0.897);transform-origin:0 0;">SESUAIKAN DENGAN SATUAN</div>
<div class="t b" style="left:88.70px;top:156.00px;font-size:8.87px;font-weight:bold;color:#111111;transform:scaleX(0.910);transform-origin:0 0;">PENDIDIKAN</div>
<div class="t b" style="left:216.10px;top:138.00px;font-size:8.72px;font-weight:bold;color:#111111;transform:scaleX(0.911);transform-origin:0 0;">NAMA PENDEK MATA</div>
<div class="t b" style="left:234.80px;top:150.00px;font-size:8.43px;font-weight:bold;color:#111111;transform:scaleX(0.889);transform-origin:0 0;">PELAJARAN</div>
<div class="a" style="left:355.5px;top:140.0px;width:95.7px;height:18.3px;border-radius:3px;background:linear-gradient(90deg,#ffff10 0%,#fbf86a 22%,#f6f5c8 45%,#f1f2f6 62%,#f2f3f7 100%)"></div>
<div class="a" style="left:342.2px;top:131.8px;width:26.9px;height:26.9px;border-radius:50%;background:radial-gradient(ellipse at 50% 48%,#4c80d4 0%,#4275c8 72%,#8db5f2 86%,#4275c8 93%,#2f5aa8 100%)"></div>
<svg style="left:342px;top:131.7px" width="27" height="27" viewBox="0 0 27 27"><path d="M3.4 13.4 L13.7 3.4 L24 13.4" fill="none" stroke="#fff" stroke-width="1.7" stroke-linejoin="miter"/><path d="M5.9 13.3 L13.7 6 L21.9 13.3 V21.6 H15.4 V15 H12 V21.6 H5.9 Z" fill="#fff"/></svg>
<div class="a" style="left:354.4px;top:169.0px;width:96.0px;height:19.5px;border-radius:3px;background:linear-gradient(90deg,#ffff10 0%,#fbf86a 22%,#f6f5c8 45%,#f1f2f6 62%,#f2f3f7 100%)"></div>
<div class="a" style="left:341.1px;top:163.5px;width:26.9px;height:25.3px;border-radius:50%;background:radial-gradient(ellipse at 50% 48%,#4c80d4 0%,#4275c8 72%,#8db5f2 86%,#4275c8 93%,#2f5aa8 100%)"></div>
<svg style="left:341.1px;top:163.5px" width="27" height="25" viewBox="0 0 27 25"><path d="M2 10.9 L9.3 4.7 V8.2 C15.5 8.2 21.5 12 23.3 19 C20 15 15.5 13 9.3 13.3 V15.9 Z" fill="#fff"/></svg>
<div class="a" style="left:354.4px;top:201.5px;width:96.0px;height:19.0px;border-radius:3px;background:linear-gradient(90deg,#ffff10 0%,#fbf86a 22%,#f6f5c8 45%,#f1f2f6 62%,#f2f3f7 100%)"></div>
<div class="a" style="left:341.1px;top:193.9px;width:26.9px;height:25.3px;border-radius:50%;background:radial-gradient(ellipse at 50% 48%,#4c80d4 0%,#4275c8 72%,#8db5f2 86%,#4275c8 93%,#2f5aa8 100%)"></div>
<svg style="left:341.1px;top:193.9px" width="27" height="25" viewBox="0 0 27 25"><path d="M2 10.9 L9.3 4.7 V8.2 C15.5 8.2 21.5 12 23.3 19 C20 15 15.5 13 9.3 13.3 V15.9 Z" fill="#fff"/></svg>
<div class="a" style="left:473.2px;top:140.0px;width:95.0px;height:19.5px;border-radius:3px;background:linear-gradient(90deg,#ffff10 0%,#fbf86a 22%,#f6f5c8 45%,#f1f2f6 62%,#f2f3f7 100%)"></div>
<div class="a" style="left:459.8px;top:133.0px;width:26.7px;height:25.5px;border-radius:50%;background:radial-gradient(ellipse at 50% 48%,#6db352 0%,#63a648 72%,#a2dc8b 86%,#63a648 93%,#4a8a35 100%)"></div>
<svg style="left:459.8px;top:133px" width="26.7" height="25.5" viewBox="0 0 26.7 25.5"><circle cx="12.5" cy="5.2" r="1.55" fill="#0d0d0d"/><path d="M10.2 7.6 H14.8 C15.6 7.6 16.3 8.2 16.3 9 V13.9 H15.1 V9.9 H14.6 V20.8 H12.8 V14.8 H12.2 V20.8 H10.4 V9.9 H9.9 V13.9 H8.7 V9 C8.7 8.2 9.4 7.6 10.2 7.6 Z" fill="#0d0d0d"/></svg>
<div class="a" style="left:473.3px;top:170.8px;width:94.9px;height:19.2px;border-radius:3px;background:linear-gradient(90deg,#ffff10 0%,#fbf86a 22%,#f6f5c8 45%,#f1f2f6 62%,#f2f3f7 100%)"></div>
<div class="a" style="left:459.8px;top:164.3px;width:26.7px;height:25.7px;border-radius:50%;background:radial-gradient(ellipse at 50% 48%,#f08a3e 0%,#e97d30 72%,#ffb883 86%,#e97d30 93%,#c9601b 100%)"></div>
<svg style="left:459.8px;top:164.3px" width="26.7" height="25.7" viewBox="0 0 26.7 25.7"><path d="M7.6 5.8 H13.6 L18.5 10.6 V19.4 H7.6 Z" fill="none" stroke="#161616" stroke-width="1.1"/><path d="M13.3 5.8 V10.8 H18.5" fill="none" stroke="#161616" stroke-width=".9"/><rect x="9.8" y="11" width="7" height="7" fill="#8a3f12"/><path d="M9.8 13.3H16.8M9.8 15.6H16.8M12.1 11V18M14.4 11V18" stroke="#3a1a08" stroke-width=".45"/><path d="M8.6 7H11.4M8.6 8.6H11.4M10 6.6V9.6" stroke="#555" stroke-width=".5"/></svg>
<div class="a" style="left:473.3px;top:201.2px;width:94.9px;height:19.5px;border-radius:3px;background:linear-gradient(90deg,#ffff10 0%,#fbf86a 22%,#f6f5c8 45%,#f1f2f6 62%,#f2f3f7 100%)"></div>
<div class="a" style="left:459.8px;top:194.9px;width:26.7px;height:25.7px;border-radius:50%;background:radial-gradient(ellipse at 50% 48%,#f08a3e 0%,#e97d30 72%,#ffb883 86%,#e97d30 93%,#c9601b 100%)"></div>
<svg style="left:459.8px;top:194.9px" width="26.7" height="25.7" viewBox="0 0 26.7 25.7"><path d="M7.6 5.8 H13.6 L18.5 10.6 V19.4 H7.6 Z" fill="none" stroke="#161616" stroke-width="1.1"/><path d="M13.3 5.8 V10.8 H18.5" fill="none" stroke="#161616" stroke-width=".9"/><rect x="9.8" y="11" width="7" height="7" fill="#8a3f12"/><path d="M9.8 13.3H16.8M9.8 15.6H16.8M12.1 11V18M14.4 11V18" stroke="#3a1a08" stroke-width=".45"/><path d="M8.6 7H11.4M8.6 8.6H11.4M10 6.6V9.6" stroke="#555" stroke-width=".5"/></svg>
<div class="t b" style="left:418.20px;top:144.00px;font-size:9.88px;font-weight:bold;color:#161616;transform:scaleX(0.873);transform-origin:0 0;">HOME</div>
<div class="t b" style="left:370.20px;top:174.00px;font-size:9.74px;font-weight:bold;color:#161616;transform:scaleX(0.863);transform-origin:0 0;">MENU RAPOR S.1</div>
<div class="t b" style="left:369.50px;top:206.00px;font-size:9.59px;font-weight:bold;color:#161616;transform:scaleX(0.885);transform-origin:0 0;">MENU RAPOR S.2</div>
<div class="t b" style="left:507.80px;top:145.00px;font-size:8.72px;font-weight:bold;color:#161616;transform:scaleX(1.000);transform-origin:0 0;">DATA MURID</div>
<div class="t b" style="left:516.50px;top:177.00px;font-size:9.16px;font-weight:bold;color:#161616;transform:scaleX(0.904);transform-origin:0 0;">RAPOR S.1</div>
<div class="t b" style="left:515.70px;top:207.00px;font-size:9.16px;font-weight:bold;color:#161616;transform:scaleX(0.918);transform-origin:0 0;">RAPOR S.2</div>
<div class="t " style="left:342.10px;top:228.00px;font-size:6.54px;color:#ececec;transform:scaleX(1.009);transform-origin:0 0;">Keterangan :</div>
<div class="t " style="left:342.10px;top:236.00px;font-size:6.54px;color:#ececec;transform:scaleX(1.046);transform-origin:0 0;">1. Apabila urutan mata pelajaran tidak diisi, maka mata pelajaran</div>
<div class="t " style="left:342.10px;top:245.00px;font-size:6.54px;color:#ececec;transform:scaleX(1.041);transform-origin:0 0;">dihalaman rapor akan kosong</div>
<div class="t " style="left:342.10px;top:253.00px;font-size:6.54px;color:#ececec;transform:scaleX(1.032);transform-origin:0 0;">2. Apabila Nama Pendek Mata Pelajaran tidak diisi, maka semua menu</div>
<div class="t " style="left:342.10px;top:262.00px;font-size:6.54px;color:#ececec;transform:scaleX(1.035);transform-origin:0 0;">mata pelajaran akan kosong.</div>
<div class="a" style="left:0;top:394.4px;width:800px;height:9.5px;background:rgba(255,255,255,.55)"></div>
<svg style="left:3px;top:396px" width="5" height="6" viewBox="0 0 5 6"><path d="M4.5 0.3V5.7L0.3 3Z" fill="#555"/></svg>
<div class="a" style="left:10px;top:396.4px;width:781px;height:5.3px;border-radius:3px;background:#707070"></div>
<svg style="left:795px;top:396px" width="5" height="6" viewBox="0 0 5 6"><path d="M0.3 0.3V5.7L4.5 3Z" fill="#555"/></svg>
<div class="a" style="left:0;top:409.5px;width:800px;height:12px;background:#f3f3f3"></div>
<div class="a" style="left:0;top:421.5px;width:800px;height:28.5px;background:linear-gradient(90deg,#f7e1e2 0%,#f5e6e6 47%,#dcedeb 53%,#d2efec 65%,#c9f1ed 100%)"></div>
<div class="t " style="left:6.70px;top:413.00px;font-size:6.69px;color:#333;transform:scaleX(0.932);transform-origin:0 0;">Ready</div>
<svg style="left:36.3px;top:412px" width="9" height="7.5" viewBox="0 0 9 7.5"><rect x="0.4" y="0.4" width="8.2" height="6.7" fill="none" stroke="#555" stroke-width=".7"/><path d="M0.4 2H8.6M2 3.5H4M2 5H3.5" stroke="#555" stroke-width=".6"/><circle cx="6.2" cy="5" r="1.7" fill="#fff" stroke="#555" stroke-width=".6"/><path d="M5.8 4.3L6.9 5L5.8 5.7Z" fill="#555"/></svg>
<svg style="left:55px;top:411.6px" width="9" height="8.5" viewBox="0 0 9 8.5"><circle cx="4.5" cy="1.6" r="1.2" fill="none" stroke="#555" stroke-width=".6"/><path d="M0.8 3.2H8.2M4.5 3.2V5.5M2.2 8.2L4.5 5.5L6.8 8.2" fill="none" stroke="#555" stroke-width=".7"/><path d="M0.5 5.8L3 8.3M3 5.8L0.5 8.3" stroke="#555" stroke-width=".5"/></svg>
<div class="t b" style="left:66.30px;top:412.00px;font-size:7.41px;color:#262626;transform:scaleX(0.908);transform-origin:0 0;">Accessibility: Investigate</div>
<div class="a" style="left:624.5px;top:409.5px;width:23.5px;height:11.8px;background:#e1e1e1"></div>
<svg style="left:631.7px;top:411.6px" width="8.3" height="7.5" viewBox="0 0 8.3 7.5"><rect x="0.4" y="0.4" width="7.5" height="6.7" fill="none" stroke="#555" stroke-width=".7"/><path d="M0.4 2.6H7.9M0.4 4.8H7.9M2.9 0.4V7.1M5.4 0.4V7.1" stroke="#555" stroke-width=".5"/></svg>
<svg style="left:655px;top:411.6px" width="9" height="7.5" viewBox="0 0 9 7.5"><rect x="0.4" y="0.4" width="8.2" height="6.7" fill="none" stroke="#555" stroke-width=".7"/><rect x="2.3" y="1.8" width="4.4" height="4" fill="none" stroke="#555" stroke-width=".6"/></svg>
<svg style="left:678px;top:411.6px" width="9" height="7.5" viewBox="0 0 9 7.5"><path d="M0.4 7.1V0.4H8.6V7.1M0.4 4.5H8.6M5 0.4V4.5" fill="none" stroke="#555" stroke-width=".7"/></svg>
<div class="a" style="left:698.4px;top:415px;width:4.6px;height:.8px;background:#888"></div>
<div class="a" style="left:706px;top:415px;width:58px;height:.8px;background:#888"></div>
<div class="a" style="left:733.7px;top:412.7px;width:3px;height:6px;background:#555"></div>
<div class="a" style="left:766.8px;top:415px;width:5.2px;height:.8px;background:#888"></div>
<div class="a" style="left:769px;top:412.8px;width:.8px;height:5.2px;background:#888"></div>
<div class="t " style="left:780.00px;top:413.00px;font-size:6.69px;color:#333;transform:scaleX(0.888);transform-origin:0 0;">100%</div>
<div class="a" style="left:12.5px;top:429.5px;width:12.5px;height:12.5px;border-radius:50%;background:radial-gradient(circle at 40% 35%,#b8c0c8,#7e8a96)"></div>
<div class="a" style="left:18px;top:436px;width:8px;height:5px;border-radius:3px;background:#eef1f4"></div>
<svg style="left:199px;top:429.3px" width="13.5" height="13.2" viewBox="0 0 13.5 13.2"><defs><linearGradient id="wg" x1="0" y1="0" x2="1" y2="1"><stop offset="0" stop-color="#3ec5f5"/><stop offset="1" stop-color="#1a7fd8"/></linearGradient></defs><rect x="0" y="0" width="6.4" height="6.3" fill="url(#wg)"/><rect x="7.1" y="0" width="6.4" height="6.3" fill="url(#wg)"/><rect x="0" y="6.9" width="6.4" height="6.3" fill="url(#wg)"/><rect x="7.1" y="6.9" width="6.4" height="6.3" fill="url(#wg)"/></svg>
<div class="a" style="left:220.8px;top:427.4px;width:127.3px;height:17px;border-radius:9px;background:#fbf3f3;box-shadow:0 0 0 .6px rgba(0,0,0,.08)"></div>
<svg style="left:227px;top:431.5px" width="9" height="9" viewBox="0 0 9 9"><circle cx="3.7" cy="3.7" r="3" fill="none" stroke="#222" stroke-width="1"/><path d="M5.9 5.9L8.5 8.5" stroke="#222" stroke-width="1.1"/></svg>
<div class="t " style="left:241.70px;top:433.00px;font-size:8.14px;color:#5a5a5a;transform:scaleX(0.926);transform-origin:0 0;">Search</div>
<svg style="left:317.5px;top:428.6px" width="30" height="15" viewBox="0 0 30 15"><defs><clipPath id="pc"><rect x="0.5" y="0.5" width="29" height="14" rx="7"/></clipPath><linearGradient id="sky" x1="0" y1="0" x2="0" y2="1"><stop offset="0" stop-color="#b9b6d8"/><stop offset="1" stop-color="#f3d9df"/></linearGradient></defs><g clip-path="url(#pc)"><rect width="30" height="15" fill="url(#sky)"/><path d="M0 10C4 8 6 7 8 6.5L10.5 1.5L13 6C15 7 17 6 19 5.5C22 6 25 8 30 9V15H0Z" fill="#6e9a3c"/><path d="M9 6L10.5 1.5L12 5.5Z" fill="#3f5e2a"/><path d="M0 11C8 10 18 10 30 12V15H0Z" fill="#e3b47a"/><path d="M6 11.5C10 10.8 14 10.8 18 11.8" stroke="#4aa3d8" stroke-width="1.2"/><path d="M1 12L4 9.5L6 12Z" fill="#3a3a5a"/></g><rect x="0.5" y="0.5" width="29" height="14" rx="7" fill="none" stroke="#a7a6c6" stroke-width=".8"/></svg>
<div class="a" style="left:355.8px;top:433px;width:10px;height:9.5px;background:#1e1e1e"></div>
<div class="a" style="left:359.6px;top:430px;width:9.7px;height:9px;background:linear-gradient(135deg,#fbfbfb 0%,#e6e6e6 50%,#bdbdbd 100%);opacity:.95"></div>
<svg style="left:381px;top:429px" width="15.5" height="14" viewBox="0 0 15.5 14"><defs><linearGradient id="cp1" x1="0" y1="0" x2="1" y2="1"><stop offset="0" stop-color="#3fb6f5"/><stop offset=".45" stop-color="#2f9c6f"/><stop offset="1" stop-color="#f2c12e"/></linearGradient><linearGradient id="cp2" x1="0" y1="0" x2="1" y2="1"><stop offset="0" stop-color="#4b7cf0"/><stop offset=".5" stop-color="#c04fd8"/><stop offset="1" stop-color="#f26b3a"/></linearGradient></defs><path d="M4.5 0.5H10C10.8 0.5 11.2 1.2 10.9 1.9L7.5 12C7.1 13 6.3 13.5 5.3 13.5H2.2C1 13.5 0.3 12.4 0.7 11.3L3.8 1.6C4 1 4.2 0.5 4.5 0.5Z" fill="url(#cp1)"/><path d="M11 13.5H5.5C4.7 13.5 4.3 12.8 4.6 12.1L8 2C8.4 1 9.2 0.5 10.2 0.5H13.3C14.5 0.5 15.2 1.6 14.8 2.7L11.7 12.4C11.5 13 11.3 13.5 11 13.5Z" fill="url(#cp2)" opacity=".92"/></svg>
<svg style="left:406.9px;top:428.8px" width="14.6" height="13.7" viewBox="0 0 14.6 13.7"><circle cx="10.5" cy="2.8" r="2.2" fill="#7b83eb"/><circle cx="5.5" cy="2.5" r="2.4" fill="#5b5fc7"/><path d="M8.5 5H14C14.3 5 14.6 5.3 14.6 5.6V9.5C14.6 11.5 13 13 11 13C9.5 13 8.5 12.2 8.5 12Z" fill="#7b83eb"/><path d="M1.8 5.2H9.5C9.8 5.2 10.1 5.5 10.1 5.8V10.5C10.1 12.3 8.6 13.7 6.8 13.7H4.9C3.2 13.7 1.8 12.3 1.8 10.6Z" fill="#5b5fc7"/><rect x="0" y="6.3" width="7" height="6.4" rx=".8" fill="#4b53bc"/><path d="M1.7 8H5.3M3.5 8V11.4" stroke="#fff" stroke-width="1"/></svg>
<svg style="left:432.5px;top:430px" width="15.6" height="12.5" viewBox="0 0 15.6 12.5"><path d="M0 1C0 0.4 0.4 0 1 0H5.5L7 1.6H14.6C15.2 1.6 15.6 2 15.6 2.6V4H0Z" fill="#e8a81e"/><rect x="0" y="3" width="15.6" height="9.5" rx="1" fill="#ffcf48"/><rect x="0" y="3" width="15.6" height="1.6" fill="#f5b92c"/><rect x="0" y="8.5" width="15.6" height="4" fill="#2f8fde"/><rect x="0" y="8" width="15.6" height="1" fill="#ffe083"/></svg>
<div class="a" style="left:438.7px;top:445.3px;width:4px;height:1.3px;border-radius:1px;background:#777"></div>
<svg style="left:458.6px;top:428.8px" width="14.8" height="14.8" viewBox="0 0 14.8 14.8"><circle cx="7.4" cy="7.4" r="7.2" fill="#db4437"/><path d="M7.4 7.4L13.6 3.8A7.2 7.2 0 0 1 7.4 14.6Z" fill="#f4c20d"/><path d="M7.4 7.4V14.6A7.2 7.2 0 0 1 1.2 3.8Z" fill="#0f9d58"/><circle cx="7.4" cy="7.4" r="3.3" fill="#fff"/><circle cx="7.4" cy="7.4" r="2.5" fill="#4285f4"/></svg>
<svg style="left:483.9px;top:428.8px" width="15" height="14.8" viewBox="0 0 15 14.8"><defs><linearGradient id="eg" x1="0" y1="1" x2="1" y2="0"><stop offset="0" stop-color="#0c59a4"/><stop offset=".6" stop-color="#1ba3e0"/><stop offset="1" stop-color="#50e6a8"/></linearGradient></defs><circle cx="7.5" cy="7.4" r="7.2" fill="url(#eg)"/><path d="M3 8.5C3 5.5 5.5 4 8 4C11 4 13.2 6 13.2 8.3C13.2 9.5 12 10 10.5 10C8.5 10 8.2 9 8.6 8.3C6.5 8 5 9.8 6.5 12.2C4.5 11.8 3 10.2 3 8.5Z" fill="#fff" opacity=".9"/></svg>
<svg style="left:510px;top:429px" width="14" height="13.5" viewBox="0 0 14 13.5"><rect x="3" y="0" width="11" height="13.5" rx="1.2" fill="#41a5ee"/><rect x="3" y="4.5" width="11" height="4.5" fill="#2b7cd3"/><rect x="3" y="9" width="11" height="4.5" rx="1" fill="#185abd"/><rect x="0" y="5" width="7.5" height="7.5" rx="1" fill="#185abd"/><path d="M1.3 6.8L2.3 10.8L3.7 7.8L5.1 10.8L6.2 6.8" fill="none" stroke="#fff" stroke-width=".8"/></svg>
<div class="a" style="left:532px;top:424.6px;width:22px;height:22.9px;border-radius:3px;background:rgba(255,255,255,.55)"></div>
<svg style="left:536px;top:428.8px" width="14" height="13.7" viewBox="0 0 14 13.7"><rect x="3" y="0" width="11" height="13.7" rx="1.2" fill="#21a366"/><rect x="8.5" y="0" width="5.5" height="4.6" fill="#33c481"/><rect x="3" y="4.6" width="11" height="4.6" fill="#107c41"/><rect x="3" y="9.2" width="11" height="4.5" rx="1" fill="#185c37"/><rect x="0" y="4.8" width="7.5" height="7.5" rx="1" fill="#107c41"/><path d="M1.8 6.5L5.5 10.8M5.5 6.5L1.8 10.8" stroke="#fff" stroke-width=".9"/></svg>
<div class="a" style="left:538.9px;top:445.2px;width:9.2px;height:1.5px;border-radius:1px;background:#1a6fd6"></div>
<svg style="left:561.7px;top:429px" width="14.5" height="13.5" viewBox="0 0 14.5 13.5"><circle cx="7.8" cy="6.75" r="6.7" fill="#ed6c47"/><path d="M7.8 0.05A6.7 6.7 0 0 1 14.5 6.75H7.8Z" fill="#ff8f6b"/><path d="M7.8 6.75H14.5A6.7 6.7 0 0 1 7.8 13.45Z" fill="#c43e1c"/><rect x="0" y="3.5" width="7.5" height="7.5" rx="1" fill="#c43e1c"/><path d="M2.5 9.5V5.2H4.2A1.2 1.2 0 0 1 4.2 7.6H2.5" fill="none" stroke="#fff" stroke-width=".8"/></svg>
<svg style="left:587.8px;top:428.8px" width="15.7" height="14" viewBox="0 0 15.7 14"><path d="M7.5 0.5C3.5 0.5 0.5 3.5 0.5 7C0.5 10.5 3.5 13.5 7 13.5C8.2 13.5 8.5 12.6 8 11.8C7.5 11 7.9 10 9 10H10.5C13 10 14.5 8.3 14.5 6.3C14.5 3 11.5 0.5 7.5 0.5Z" fill="#64b6e8"/><circle cx="4" cy="6" r="1.2" fill="#f5c518"/><circle cx="6.5" cy="3.5" r="1.2" fill="#e74c3c"/><circle cx="10" cy="3.6" r="1.2" fill="#2ecc71"/><path d="M15.5 2L10 9" stroke="#3a3a3a" stroke-width="1.2"/><path d="M10 9L8.8 11" stroke="#f39c12" stroke-width="1.6"/></svg>
<div class="a" style="left:593.8px;top:445.3px;width:4px;height:1.3px;border-radius:1px;background:#777"></div>
<svg style="left:666.8px;top:433.3px" width="6.8" height="3.9" viewBox="0 0 6.8 3.9"><path d="M0.4 3.5L3.4 0.4L6.4 3.5" fill="none" stroke="#333" stroke-width=".9"/></svg>
<div class="a" style="left:666.8px;top:433.3px;width:0;height:0"></div>
<svg style="left:683.7px;top:431.5px" width="11" height="9.5" viewBox="0 0 11 9.5"><path d="M2.5 7.5C1.2 7.5 0.4 6.7 0.4 5.6C0.4 4.5 1.2 3.8 2.3 3.8C2.6 2 3.9 0.8 5.6 0.8C7.2 0.8 8.5 2 8.7 3.6" fill="#d6dde3" stroke="#555" stroke-width=".7"/><circle cx="7.8" cy="6.4" r="3" fill="#1e73d9"/><path d="M6.6 6.6L7.6 7.5L9.2 5.5" fill="none" stroke="#fff" stroke-width=".7"/></svg>
<svg style="left:702.2px;top:431.3px" width="10.2" height="10" viewBox="0 0 10.2 10"><circle cx="5.1" cy="5" r="4.6" fill="none" stroke="#333" stroke-width=".8"/><ellipse cx="5.1" cy="5" rx="2" ry="4.6" fill="none" stroke="#333" stroke-width=".7"/><path d="M0.5 5H9.7M1.3 2.6H8.9M1.3 7.4H8.9" stroke="#333" stroke-width=".6"/></svg>
<svg style="left:716.8px;top:432px" width="9" height="8" viewBox="0 0 9 8"><path d="M0.5 2.7H2.3L4.6 0.6V7.4L2.3 5.3H0.5Z" fill="none" stroke="#333" stroke-width=".8"/><path d="M6 2.4C6.8 3.2 6.8 4.8 6 5.6" fill="none" stroke="#aaa" stroke-width=".7"/></svg>
<svg style="left:730.8px;top:433.3px" width="12.6" height="5.2" viewBox="0 0 12.6 5.2"><rect x="0.4" y="0.4" width="10.8" height="4.4" rx="1.2" fill="none" stroke="#222" stroke-width=".8"/><rect x="1.5" y="1.4" width="8.6" height="2.4" fill="#222"/><rect x="11.5" y="1.7" width="1" height="1.8" fill="#222"/></svg>
<div class="t " style="left:772.00px;top:427.37px;font-size:7.00px;color:#222;transform:scaleX(0.969);transform-origin:0 0;">20:40</div>
<div class="t " style="left:752.90px;top:436.79px;font-size:7.57px;color:#222;transform:scaleX(0.953);transform-origin:0 0;">19/01/2026</div>
</body></html>
